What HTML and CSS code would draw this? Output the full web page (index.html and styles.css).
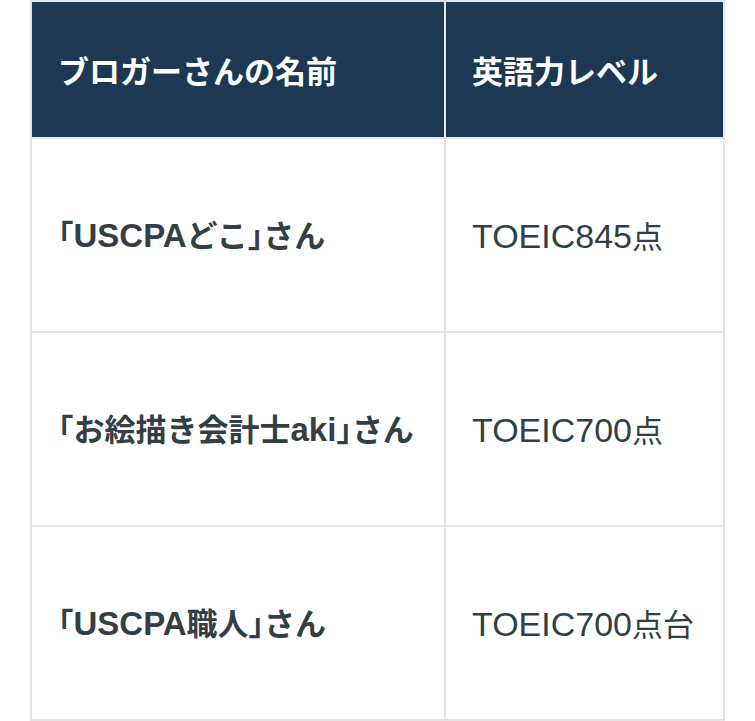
FILE: index.html
```html
<!DOCTYPE html>
<html lang="ja">
<head>
<meta charset="utf-8">
<link rel="stylesheet" href="styles.css">
</head>
<body>
<table class="tbl">
  <thead>
    <tr><th class="c1">ブロガーさんの名前</th><th class="c2">英語力レベル</th></tr>
  </thead>
  <tbody>
    <tr><td class="name"><span class="br">「</span><span class="en">USCPA</span>どこ<span class="br">」</span>さん</td><td class="lvl"><span class="en">TOEIC845</span>点</td></tr>
    <tr><td class="name"><span class="br">「</span>お絵描き会計士<span class="en">aki</span><span class="br">」</span>さん</td><td class="lvl"><span class="en">TOEIC700</span>点</td></tr>
    <tr><td class="name"><span class="br">「</span><span class="en">USCPA</span>職人<span class="br">」</span>さん</td><td class="lvl"><span class="en">TOEIC700</span>点台</td></tr>
  </tbody>
</table>
</body>
</html>
```
FILE: styles.css
```css
html, body {
  margin: 0;
  padding: 0;
  background: #ffffff;
}
body {
  font-family: "Noto Sans CJK JP", "Noto Sans", sans-serif;
}
.tbl {
  margin-left: 30px;
  border-collapse: collapse;
  border: 2px solid #e4e4e4;
  table-layout: fixed;
  width: 695px;
}
.tbl th, .tbl td {
  border: 2px solid #e4e4e4;
  padding: 0 26px;
  text-align: left;
  vertical-align: middle;
  font-size: 31px;
  line-height: 40px;
  white-space: nowrap;
}
.tbl th {
  background: #1c3853;
  color: #ffffff;
  font-weight: 700;
  height: 135px;
}
.c1 { width: 360px; }
.tbl td {
  height: 192px;
  color: #323f44;
}
.name { font-weight: 700; }
.lvl { font-weight: 400; }
.en {
  font-family: "Liberation Sans", Arial, sans-serif;
}
.name .en { font-size: 33px; }
.lvl .en { font-size: 34px; }
.br {
  font-feature-settings: "halt";
}
```
